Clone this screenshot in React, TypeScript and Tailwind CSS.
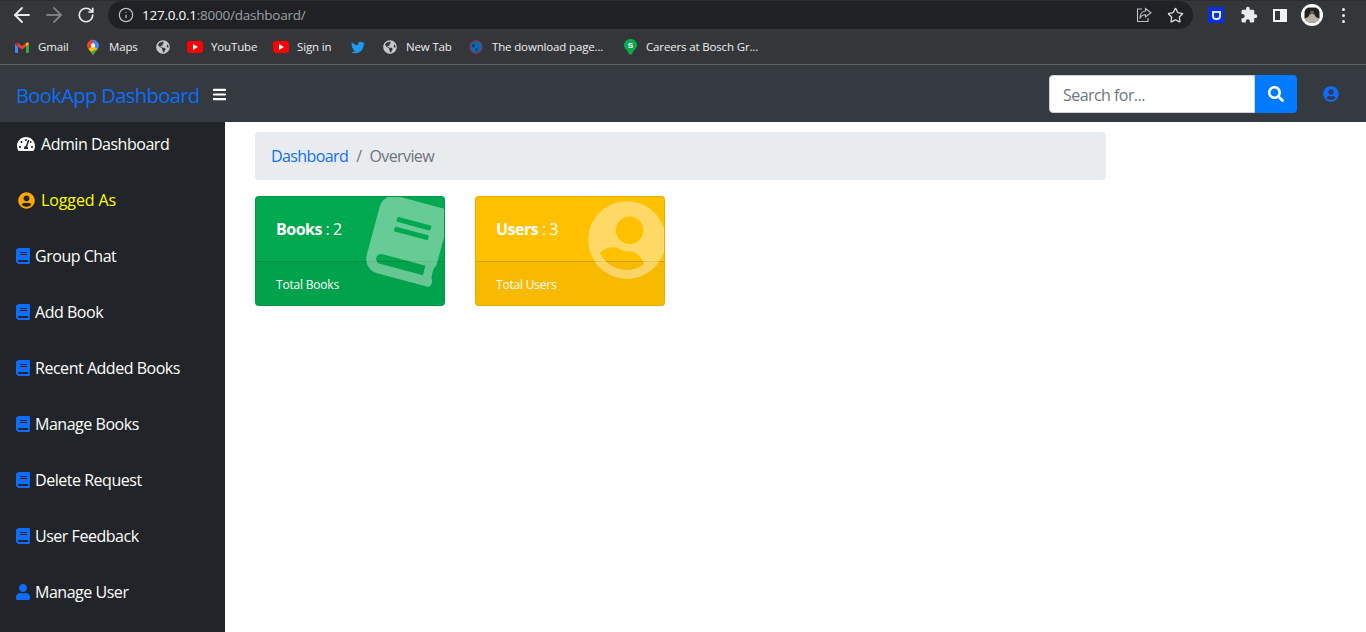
import React from "react";
import { FaBars, FaBook, FaGlobeAmericas, FaSearch, FaTachometerAlt, FaTwitter, FaUser, FaUserCircle } from "react-icons/fa";
import { MdExtension } from "react-icons/md";
import { ArrowLeft, ArrowRight, Info, RotateCw, Star } from "lucide-react";

const font = "font-['Open_Sans','Noto_Sans',sans-serif]";

function Gmail() {
  return (
    <svg width="14" height="11" viewBox="0 0 14 11">
      <path d="M0 2v8a1 1 0 0 0 1 1h2V4.500z" fill="#4285f4" />
      <path d="M14 2v8a1 1 0 0 1-1 1h-2V4.500z" fill="#34a853" />
      <path d="M3 4.500 7 7.500l4-3V1L7 4 3 1z" fill="#ea4335" />
      <path d="M0 2c0-1.500 1.800-2 3-1v3.500z" fill="#c5221f" />
      <path d="M14 2c0-1.500-1.800-2-3-1v3.500z" fill="#fbbc04" />
    </svg>
  );
}

function MapsPin() {
  return (
    <svg width="13" height="17" viewBox="0 0 13 17">
      <path d="M6.500 0C3 0 0 2.800 0 6.300c0 1.500.6 2.700 1.300 3.700L6.500 6z" fill="#ea4335" />
      <path d="M6.500 0c1.700 0 3.300.7 4.500 1.900L6.500 6.500z" fill="#4285f4" />
      <path d="M11 1.900c1.200 1.200 2 2.700 2 4.400 0 1.400-.6 2.700-1.300 3.700L6.500 6.500z" fill="#4285f4" />
      <path d="M1.300 10 6.500 6.500l5.200 3.500c-1.500 2-4 3.500-5.200 7-1.200-3.500-3.700-5-5.200-7z" fill="#fbbc04" />
      <path d="M4 13 11.700 10c-1.500 2-4 3.500-5.200 7-.5-1.500-1.500-2.800-2.500-4z" fill="#34a853" />
      <circle cx="6.500" cy="6.300" r="2.300" fill="#fff" />
    </svg>
  );
}

function YouTube() {
  return (
    <div className="flex h-[12px] w-4 items-center justify-center rounded-[3px] bg-[#ff0000]">
      <div className="h-0 w-0 border-y-[3px] border-l-[5px] border-y-transparent border-l-white" />
    </div>
  );
}

function Globe() {
  return (
    <div className="flex h-[14px] w-[14px] items-center justify-center rounded-full bg-[#35363a]">
      <FaGlobeAmericas size={14} className="text-[#c4c7c9]" />
    </div>
  );
}

function DownloadIcon() {
  return (
    <svg width="14" height="14" viewBox="0 0 14 14">
      <circle cx="7" cy="7" r="6.500" fill="#1167a8" stroke="#a3222a" />
      <path d="M4 3.500 6 5.500 4.500 8 3 6z" fill="#123a63" />
      <path d="M7 8 9 9.500 7.500 11.500 6 10z" fill="#123a63" />
    </svg>
  );
}

function SPin() {
  return (
    <svg width="13" height="16" viewBox="0 0 13 16">
      <path d="M6.500 0C2.900 0 0 2.700 0 6.200c0 2.300 1.500 4 3 5.300.9.800 1.300 2 1.500 3.300.1.800 4 .8 4 0 .2-1.300.6-2.500 1.500-3.300 1.500-1.300 3-3 3-5.300C13 2.700 10.100 0 6.500 0z" fill="#0aa84f" />
      <text x="6.500" y="8.500" textAnchor="middle" fontSize="8" fontWeight="700" fill="#fff" fontFamily="Liberation Sans">S</text>
    </svg>
  );
}

function Avatar() {
  return (
    <svg width="22" height="22" viewBox="0 0 22 22" className="ml-[14px]">
      <circle cx="11" cy="11" r="11" fill="#fff" />
      <rect x="3.500" y="3.500" width="15" height="15" fill="#23221f" />
      <path d="M4 18.500v-4l3-1.500 2-3h4l2 3 3 1.500v4z" fill="#b5b0a3" />
      <circle cx="11" cy="8.500" r="1.800" fill="#6d675c" />
      <circle cx="11" cy="11" r="9.500" fill="none" stroke="#fff" strokeWidth="2" />
    </svg>
  );
}

function Bookmark({ icon, label, w, iconW, gap }: { icon: React.ReactNode; label?: string; w?: number; iconW: string; gap?: string }) {
  return (
    <div className="flex items-center">
      <div className={`flex items-center justify-center ${iconW}`}>{icon}</div>
      {label && (
        <span className={`whitespace-nowrap text-[11.5px] tracking-[-0.15px] text-[#eceef0] ${gap}`} style={{ width: w }}>
          {label}
        </span>
      )}
    </div>
  );
}

function Chrome() {
  return (
    <div className={`h-[66px] bg-[#35363a] ${font}`}>
      <div className="flex h-[32px] items-center border-t border-[#2b2c2f] pb-[3px] pl-[10px]">
        <ArrowLeft size={24} strokeWidth={1.800} className="text-[#e8eaed]" />
        <ArrowRight size={24} strokeWidth={1.800} className="ml-[8px] text-[#7d7f82]" />
        <RotateCw size={18} strokeWidth={2.200} className="ml-[11px] text-[#e8eaed]" />
        <div className="ml-[13px] flex h-[28px] w-[1085px] items-center rounded-full bg-[#202124] pl-[10px] pr-[9px]">
          <Info size={16} strokeWidth={1.800} className="text-[#bdc1c6]" />
          <span className="ml-[8px] whitespace-nowrap text-[13.5px] tracking-[-0.24px] text-white">
            127.0.0.1<span className="text-[#9aa0a6]">:8000/dashboard/</span>
          </span>
          <div className="ml-auto flex items-center gap-[15px]">
            <svg width="16" height="16" viewBox="0 0 16 16" fill="none" stroke="#bdc1c6" strokeWidth="1.100">
              <path d="M6 2H1.500v12.500H12V11" />
              <path d="M9.500 1.500 15 5.800 9.500 10V7.700C6.500 7.700 4.800 9 3.800 11.500 3.800 7.500 6 4.300 9.500 4z" />
            </svg>
            <Star size={17} strokeWidth={1.800} className="text-[#dadce0]" />
          </div>
        </div>
        <div className="ml-[15px] flex h-4 w-4 items-center justify-center bg-[#0a2fdc]">
          <div className="h-[9px] w-[9px] rounded-b-[4px] border-2 border-[#dfe6ff]" />
        </div>
        <MdExtension size={18} className="ml-[16px] text-[#e8eaed]" />
        <div className="ml-[15px] flex h-[13px] w-[14px] justify-end border-2 border-[#f1f3f4] bg-[#35363a]">
          <div className="h-full w-[5px] bg-[#f1f3f4]" />
        </div>
        <Avatar />
        <div className="ml-[19px] flex flex-col gap-[3px]">
          <div className="h-[3px] w-[3px] rounded-full bg-[#e8eaed]" />
          <div className="h-[3px] w-[3px] rounded-full bg-[#e8eaed]" />
          <div className="h-[3px] w-[3px] rounded-full bg-[#e8eaed]" />
        </div>
      </div>
      <div className="flex h-[33px] items-center border-b border-[#5f6368] pb-[2px] pl-[15px]">
        <div className="flex items-center gap-[18px]">
          <Bookmark icon={<Gmail />} iconW="w-[14px]" label="Gmail" w={31} gap="ml-[9px]" />
          <Bookmark icon={<MapsPin />} iconW="w-[12px]" label="Maps" w={29} gap="ml-[10px]" />
          <Bookmark icon={<Globe />} iconW="w-[14px]" />
        </div>
        <div className="ml-[17px] flex items-center gap-[16px]">
          <Bookmark icon={<YouTube />} iconW="w-4" label="YouTube" w={46} gap="ml-[8px]" />
          <Bookmark icon={<YouTube />} iconW="w-4" label="Sign in" w={36} gap="ml-[8px]" />
        </div>
        <div className="ml-[18px] flex items-center gap-[18px]">
          <Bookmark icon={<FaTwitter size={15} className="text-[#1d9bf0]" />} iconW="w-[14px]" />
          <Bookmark icon={<Globe />} iconW="w-[14px]" label="New Tab" w={45} gap="ml-[9px]" />
          <Bookmark icon={<DownloadIcon />} iconW="w-[14px]" label="The download page..." w={114} gap="ml-[9px]" />
          <Bookmark icon={<SPin />} iconW="w-[13px]" label="Careers at Bosch Gr..." w={112} gap="ml-[9px]" />
        </div>
      </div>
    </div>
  );
}

function Navbar() {
  return (
    <div className="flex h-[56px] items-center bg-[#343a40] pl-4 pr-[27px]">
      <span className="whitespace-nowrap pt-[3px] text-[20px] tracking-[-0.56px] text-[#0d6efd]">BookApp Dashboard</span>
      <FaBars className="ml-[13px] h-[15px] w-[13px] text-white" />
      <div className="ml-auto flex h-[38px] w-[248px]">
        <div className="flex flex-1 items-center rounded-l-[4px] border border-[#ced4da] bg-white pl-[13px] pt-[2px] text-[16px] tracking-[-0.55px] text-[#6c757d]">
          Search for...
        </div>
        <div className="flex w-[42px] items-center justify-center rounded-r-[4px] bg-[#007bff]">
          <FaSearch size={16} className="text-white" />
        </div>
      </div>
      <FaUserCircle size={16} className="ml-[26px] text-[#0d6efd]" />
    </div>
  );
}

function NavItem({ icon, label, color = "text-white", gap, tracking = "tracking-[-0.47px]" }: { icon: React.ReactNode; label: string; color?: string; gap: string; tracking?: string }) {
  return (
    <div className={`flex h-11 items-center whitespace-nowrap text-[16px] ${tracking} ${color}`}>
      {icon}
      <span className={gap}>{label}</span>
    </div>
  );
}

const bookIcon = <FaBook className="h-4 w-[14px] text-[#0d6efd]" />;

function Sidebar() {
  const books = ["Group Chat", "Add Book", "Recent Added Books", "Manage Books", "Delete Request", "User Feedback"];
  return (
    <aside className="flex w-[225px] shrink-0 flex-col gap-3 bg-[#212529] pl-4">
      <NavItem icon={<FaTachometerAlt size={18} className="ml-px text-white" />} label="Admin Dashboard" gap="ml-[6px]" />
      <NavItem
        icon={<FaUserCircle size={17} className="ml-[2px] text-[#ffa800]" />}
        label="Logged As"
        color="text-[#ffff00]"
        gap="ml-[6px]"
        tracking="tracking-[-0.1px]"
      />
      {books.map((b) => (
        <NavItem key={b} icon={bookIcon} label={b} gap="ml-[5px]" />
      ))}
      <NavItem icon={<FaUser className="h-4 w-[14px] text-[#0d6efd]" />} label="Manage User" gap="ml-[5px]" />
    </aside>
  );
}

function StatCard({
  bg,
  title,
  value,
  footer,
  icon,
}: {
  bg: string;
  title: string;
  value: number;
  footer: string;
  icon: React.ReactNode;
}) {
  return (
    <div className={`relative flex h-[110px] w-[190px] flex-col overflow-hidden rounded-[4px] border border-black/10 text-white ${bg}`}>
      <div className="flex h-[64px] items-center pl-5 text-[16px] tracking-[-0.5px]">
        <span>
          <b className="font-bold">{title}</b> : {value}
        </span>
      </div>
      <div className="flex flex-1 items-center border-t border-black/15 bg-black/[0.03] pl-5 pt-[2px] text-[12px] tracking-[-0.2px]">
        {footer}
      </div>
      {icon}
    </div>
  );
}

export default function App() {
  return (
    <div className={`flex h-[632px] w-[1366px] flex-col overflow-hidden bg-white ${font}`}>
      <Chrome />
      <Navbar />
      <div className="flex flex-1 overflow-hidden">
        <Sidebar />
        <main className="flex-1 pl-[30px] pt-[10px]">
          <div className="mb-4 flex h-12 w-[851px] items-center rounded-[4px] bg-[#e9ecef] pl-4 text-[16px] tracking-[-0.6px] text-[#6c757d]">
            <span className="text-[#0d6efd]">Dashboard</span>
            <span className="mx-2">/</span>
            <span>Overview</span>
          </div>
          <div className="flex gap-[30px]">
            <StatCard
              bg="bg-[#00a84f]"
              title="Books"
              value={2}
              footer="Total Books"
              icon={<FaBook size={80} className="absolute right-[-3px] top-[3px] rotate-[15deg] text-white/40" />}
            />
            <StatCard
              bg="bg-[#ffc000]"
              title="Users"
              value={3}
              footer="Total Users"
              icon={<FaUserCircle size={80} className="absolute right-[-3px] top-[3px] rotate-[15deg] text-white/40" />}
            />
          </div>
        </main>
      </div>
    </div>
  );
}
